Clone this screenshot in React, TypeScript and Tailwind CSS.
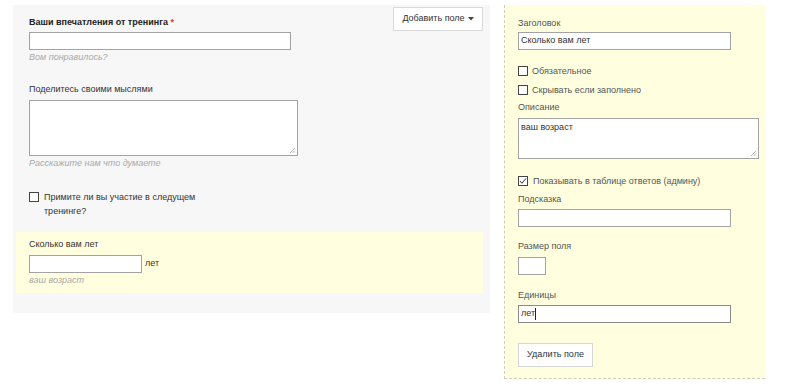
import React from "react";

const Grip = () => (
  <svg className="absolute right-[1px] bottom-[1px]" width="7" height="7" viewBox="0 0 7 7">
    <path d="M6 1 L1 6 M6 3.5 L3.5 6 M6 5.5 L5.5 6" stroke="#aaa" strokeWidth="0.8" />
  </svg>
);

const Box = ({ checked = false }: { checked?: boolean }) => (
  <span className="inline-flex w-[10px] h-[10px] border border-[#444] bg-white shrink-0 items-center justify-center">
    {checked && (
      <svg width="8" height="8" viewBox="0 0 8 8">
        <path d="M1 4 L3 6.3 L7 1.3" stroke="#333" strokeWidth="1" fill="none" />
      </svg>
    )}
  </span>
);

export default function App() {
  return (
    <div
      className="w-[787px] h-[388px] bg-white flex items-start text-[9px] text-[#333]"
      style={{ fontFamily: '"Liberation Sans", Arial, sans-serif' }}
    >
      {/* Left panel */}
      <div className="ml-[13px] mt-[5px] w-[477px] h-[308px] bg-[#f7f7f7] pl-[3px] pr-[7px] flex flex-col">
        <div className="flex justify-between items-start">
          <div className="pl-[13px] pt-[11px] flex flex-col">
            <div className="leading-[12px] font-bold text-[#222]">
              Ваши впечатления от тренинга <span className="text-[#d33]">*</span>
            </div>
            <div className="mt-[4px] w-[262px] h-[18px] bg-white border border-[#a3a3a3]" />
            <div className="mt-[1px] leading-[12px] italic text-[#a8a8a8]">Вом понравилось?</div>
          </div>
          <div className="mt-[2px] w-[90px] h-[24px] bg-white border border-[#dadada] flex items-center justify-center gap-[3px] text-[#333]">
            <span>Добавить поле</span>
            <svg width="6" height="4" viewBox="0 0 6 4">
              <path d="M0 0 L6 0 L3 3.5 Z" fill="#444" />
            </svg>
          </div>
        </div>
        <div className="pl-[13px] flex flex-col">
          <div className="mt-[20px] leading-[12px]">Поделитесь своими мыслями</div>
          <div className="relative mt-[5px] w-[269px] h-[56px] bg-white border border-[#a3a3a3]">
            <Grip />
          </div>
          <div className="mt-[1px] leading-[12px] italic text-[#a8a8a8]">Расскажите нам что думаете</div>
          <div className="mt-[21px] flex items-start leading-[14px]">
            <span className="mt-[2px]">
              <Box />
            </span>
            <span className="ml-[5px] w-[160px]">Примите ли вы участие в следущем тренинге?</span>
          </div>
        </div>
        <div className="mt-[14px] h-[61px] bg-[#ffffe0] pl-[13px] pt-[6px] flex flex-col">
          <div className="leading-[12px]">Сколько вам лет</div>
          <div className="mt-[5px] flex items-center">
            <div className="w-[113px] h-[18px] bg-white border border-[#a3a3a3]" />
            <span className="ml-[3px]">лет</span>
          </div>
          <div className="mt-[1px] leading-[12px] italic text-[#a8a8a8]">ваш возраст</div>
        </div>
      </div>

      {/* Right panel */}
      <div className="ml-[14px] mt-[5px] w-[261px] h-[374px] bg-[#ffffe0] border-l border-b border-dashed border-[#cfcfbf] pl-[13px] pt-[12px] flex flex-col text-[#555]">
        <div className="leading-[12px]">Заголовок</div>
        <div className="mt-[3px] w-[213px] h-[18px] bg-white border border-[#a3a3a3] flex items-center pl-[2px] text-[#333]">
          Сколько вам лет
        </div>
        <div className="mt-[14px] flex items-center leading-[14px] gap-[4px]">
          <Box />
          <span>Обязательное</span>
        </div>
        <div className="mt-[5px] flex items-center leading-[14px] gap-[4px]">
          <Box />
          <span>Скрывать если заполнено</span>
        </div>
        <div className="mt-[4px] leading-[12px]">Описание</div>
        <div className="relative mt-[5px] w-[241px] h-[41px] bg-white border border-[#a3a3a3] pl-[2px] pt-[2px] leading-[12px] text-[#333]">
          ваш возраст
          <Grip />
        </div>
        <div className="mt-[15px] flex items-center leading-[14px] gap-[5px]">
          <Box checked />
          <span>Показывать в таблице ответов (админу)</span>
        </div>
        <div className="mt-[5px] leading-[12px]">Подсказка</div>
        <div className="mt-[4px] w-[213px] h-[18px] bg-white border border-[#a3a3a3]" />
        <div className="mt-[13px] leading-[12px]">Размер поля</div>
        <div className="mt-[5px] w-[28px] h-[18px] bg-white border border-[#a3a3a3]" />
        <div className="mt-[14px] leading-[12px]">Единицы</div>
        <div className="mt-[4px] w-[213px] h-[18px] bg-white border border-[#8a8a8a] flex items-center pl-[2px] text-[#333]">
          лет<span className="inline-block w-[1px] h-[12px] bg-[#222]" />
        </div>
        <div className="mt-[20px] w-[75px] h-[24px] bg-white border border-[#d6d6d6] flex items-center justify-center text-[#333]">
          Удалить поле
        </div>
      </div>
    </div>
  );
}
